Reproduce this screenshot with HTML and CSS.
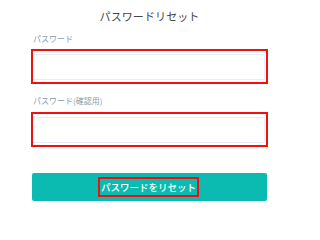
FILE: index.html
```html
<!DOCTYPE html>
<html lang="ja">
<head>
<meta charset="utf-8">
<link rel="stylesheet" href="styles.css">
</head>
<body>
<div class="page">
  <h1 class="title">パスワードリセット</h1>
  <div class="label label-first">パスワード</div>
  <div class="field"><div class="input"></div></div>
  <div class="label label-second">パスワード(確認用)</div>
  <div class="field field-second"><div class="input"></div></div>
  <div class="button"><span class="button-text">パスワードをリセット</span></div>
</div>
</body>
</html>
```
FILE: styles.css
```css
html, body {
  margin: 0;
  padding: 0;
  background: #ffffff;
}
.page {
  width: 300px;
  height: 216px;
  padding: 2px 32px 0 31px;
  box-sizing: border-box;
  font-family: "Noto Sans CJK JP", "Noto Sans", sans-serif;
}
.title {
  margin: 0;
  height: 28px;
  line-height: 28px;
  font-size: 11px;
  font-weight: 400;
  letter-spacing: 0.1px;
  color: #444444;
  text-align: center;
}
.label {
  height: 12px;
  line-height: 12px;
  font-size: 8px;
  color: #8b9ca6;
  padding-left: 2px;
}
.label-first {
  margin-top: 3px;
}
.label-second {
  margin-top: 11px;
}
.field {
  margin-top: 4px;
  height: 35px;
  box-sizing: border-box;
  border: 2px solid #ee1111;
  padding: 3px 1px 2px 0;
}
.field-second {
  margin-top: 5px;
}
.input {
  height: 100%;
  box-sizing: border-box;
  border-top: 1px solid #e9ecf4;
  border-bottom: 1px solid #e9ecf4;
  border-right: 1px solid #eef0f6;
}
.button {
  margin-top: 26px;
  margin-left: 1px;
  width: 235px;
  height: 28px;
  border-radius: 2px;
  background: #0bbbb1;
  display: flex;
  align-items: center;
  justify-content: center;
}
.button-text {
  display: block;
  box-sizing: border-box;
  width: 101px;
  height: 20px;
  border: 2px solid #ee1111;
  line-height: 16px;
  text-align: center;
  font-size: 9.5px;
  font-weight: 500;
  color: #ffffff;
  white-space: nowrap;
  margin-left: -2px;
}
```
